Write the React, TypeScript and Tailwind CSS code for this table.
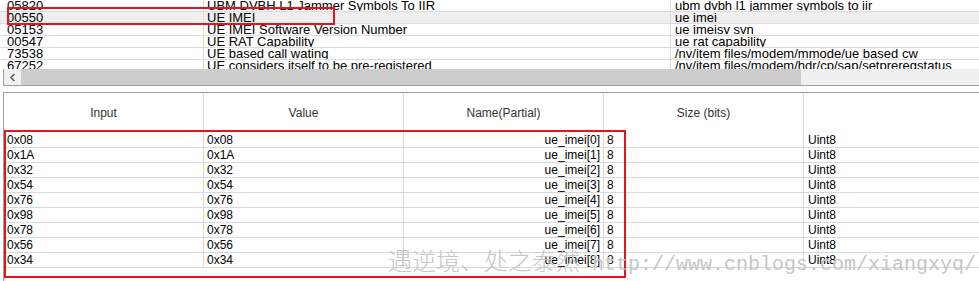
import React from "react";

const topRows = [
  ["05820", "UBM DVBH L1 Jammer Symbols To IIR", "ubm dvbh l1 jammer symbols to iir"],
  ["00550", "UE IMEI", "ue imei"],
  ["05153", "UE IMEI Software Version Number", "ue imeisv svn"],
  ["00547", "UE RAT Capability", "ue rat capability"],
  ["73538", "UE based call wating", "/nv/item files/modem/mmode/ue based cw"],
  ["67252", "UE considers itself to be pre-registered", "/nv/item files/modem/hdr/cp/sap/setpreregstatus"],
];

const bytes = ["0x08", "0x1A", "0x32", "0x54", "0x76", "0x98", "0x78", "0x56", "0x34"];

export default function App() {
  return (
    <div className="relative w-[979px] h-[281px] overflow-hidden bg-white text-black font-['Liberation_Sans',Arial,sans-serif] flex flex-col">
      {/* top list */}
      <div className="h-[69px] overflow-hidden shrink-0">
        {topRows.map((r, i) => (
          <div
            key={i}
            className={`flex h-[12px] border-b border-[#dcdcdc] text-[13px] leading-[11px] ${i === 1 ? "bg-[#efefef]" : ""}`}
          >
            <div className="w-[204px] border-r border-[#dcdcdc] pl-[7px] overflow-hidden whitespace-nowrap">{r[0]}</div>
            <div className="w-[467px] border-r border-[#dcdcdc] pl-[3px] overflow-hidden whitespace-nowrap">{r[1]}</div>
            <div className="flex-1 pl-[4px] overflow-hidden whitespace-nowrap">{r[2]}</div>
          </div>
        ))}
      </div>
      {/* horizontal scrollbar */}
      <div className="ml-[3px] h-[17px] border-l border-b border-[#a0a0a0] flex shrink-0">
        <div className="w-[17px] bg-[#f0f0f0] flex items-center justify-center">
          <svg width="8" height="9" viewBox="0 0 8 9">
            <path d="M5.5 1 L2 4.5 L5.5 8" fill="none" stroke="#606060" strokeWidth="1.6" />
          </svg>
        </div>
        <div className="w-[780px] bg-[#cdcdcd]" />
        <div className="flex-1 bg-[#f0f0f0]" />
      </div>
      <div className="h-[6px] shrink-0" />
      {/* bottom table */}
      <div className="ml-[3px] flex-1 border-l border-t border-[#a0a0a0] text-[12px]">
        <div className="flex h-[40px] text-[#333]">
          <div className="w-[200px] border-r border-[#dcdcdc] flex items-center justify-center">Input</div>
          <div className="w-[200px] border-r border-[#dcdcdc] flex items-center justify-center">Value</div>
          <div className="w-[200px] border-r border-[#dcdcdc] flex items-center justify-center">Name(Partial)</div>
          <div className="w-[200px] border-r border-[#dcdcdc] flex items-center justify-center">Size (bits)</div>
          <div className="flex-1" />
        </div>
        {bytes.map((b, i) => (
          <div key={i} className="flex h-[15px] border-b border-[#d9d9d9] leading-[14px]">
            <div className="w-[200px] border-r border-[#d9d9d9] pl-[3px]">{b}</div>
            <div className="w-[200px] border-r border-[#d9d9d9] pl-[3px]">{b}</div>
            <div className="w-[200px] border-r border-[#d9d9d9] pr-[3px] text-right">ue_imei[{i}]</div>
            <div className="w-[200px] border-r border-[#d9d9d9] pl-[3px]">8</div>
            <div className="flex-1 pl-[4px]">Uint8</div>
          </div>
        ))}
      </div>

      {/* red highlight boxes */}
      <div className="absolute left-[7px] top-[7px] w-[328px] h-[18px] border-2 border-[#e8141b]" />
      <div className="absolute left-[4px] top-[130px] w-[622px] h-[148px] border-2 border-[#e8141b]" />

      {/* watermark */}
      <div className="absolute left-[388px] top-[248px] flex items-baseline whitespace-nowrap text-[#c6c6c6] leading-none pointer-events-none">
        <span className="text-[24px] font-light font-['Noto_Sans_CJK_SC',sans-serif]">遇逆境、处之泰然</span>
        <span className="text-[20px] font-['Liberation_Mono',monospace]">&nbsp;http://www.cnblogs.com/xiangxyq/</span>
      </div>
    </div>
  );
}
